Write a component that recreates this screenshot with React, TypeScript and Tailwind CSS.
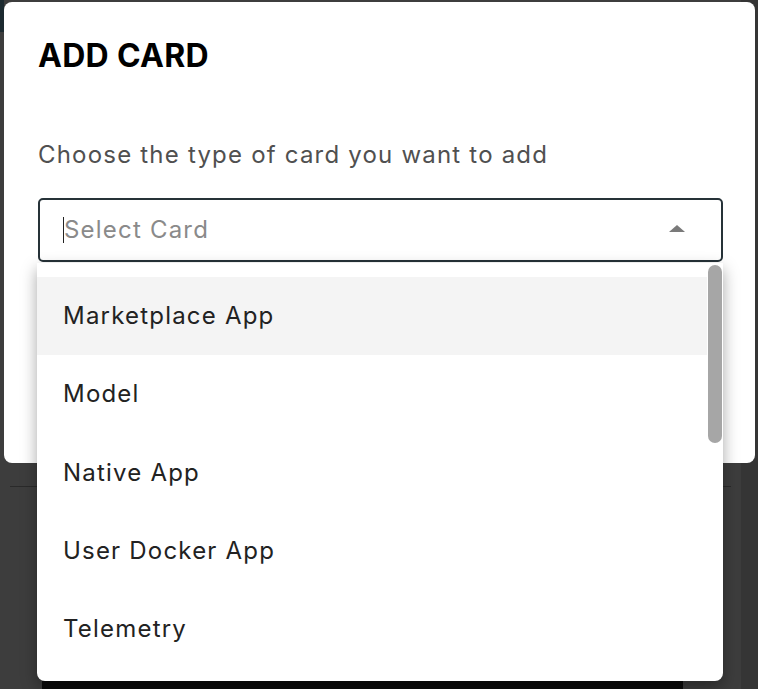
import React from "react";

const items = ["Marketplace App", "Model", "Native App", "User Docker App", "Telemetry"];

export default function App() {
  return (
    <div
      className="relative w-[758px] h-[689px] overflow-hidden bg-[#3d3d3d]"
      style={{ fontFamily: "Inter, 'Noto Sans', sans-serif" }}
    >
      {/* background app */}
      <div className="flex h-full">
        <div className="flex-1 flex flex-col">
          <div className="h-[486px]" />
          <div className="mx-[10px] h-px bg-[#2a2a2a]" />
          <div className="flex-1" />
          <div className="ml-[42px] mr-[58px] h-[8px] bg-[#0a0a0a]" />
        </div>
        <div className="w-[17px] bg-[#353535]" />
      </div>
      <div className="absolute left-0 top-0 w-[4px] h-[32px] bg-[#1c2a30]" />

      {/* modal */}
      <div className="absolute left-[4px] top-[2px] w-[751px] h-[461px] rounded-[8px] bg-white px-[34px] pt-[35px]">
        <h1 className="text-[32px] leading-[38px] font-bold text-black tracking-[0.3px]">ADD CARD</h1>
        <p className="mt-[65px] text-[24px] leading-[30px] text-[#505050] tracking-[1.2px]">Choose the type of card you want to add</p>
        <div className="relative mt-[28px] h-[64px] w-[685px] rounded-[5px] border-2 border-[#263238] flex items-center pl-[23px] pr-[48px]">
          <div className="w-px h-[26px] bg-[#222]" />
          <span className="text-[24px] text-[#8a8a8a] tracking-[1.2px]">Select Card</span>
          <div className="absolute right-[36px] top-[25px] w-0 h-0 border-l-[8px] border-r-[8px] border-b-[7px] border-l-transparent border-r-transparent border-b-[#7a7a7a]" />
        </div>
      </div>

      {/* dropdown menu */}
      <div className="absolute left-[37px] top-[263px] w-[686px] h-[418px] rounded-b-[8px] bg-white shadow-[0_6px_16px_rgba(0,0,0,0.35)] overflow-hidden">
        <div className="flex flex-col pt-[14px] pr-[16px]">
          {items.map((it, i) => (
            <div
              key={it}
              className={`h-[78.3px] flex items-center pl-[26px] text-[24px] text-[#222] tracking-[1.2px] ${i === 0 ? "bg-[#f4f4f4]" : ""}`}
            >
              {it}
            </div>
          ))}
        </div>
        <div className="absolute right-[1px] top-[2px] w-[14px] h-[178px] rounded-full bg-[#a6a6a6]" />
      </div>
    </div>
  );
}
